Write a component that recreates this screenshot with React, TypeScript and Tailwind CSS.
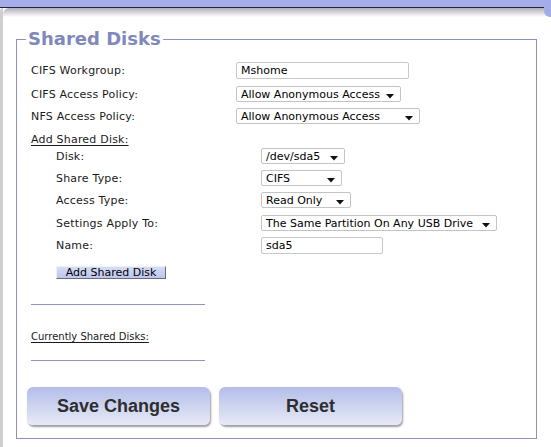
import React from "react";

const Arrow = () => (
  <svg width="8" height="5" viewBox="0 0 8 5" className="mt-[4px] shrink-0 ml-[4px]">
    <path d="M0 0 H8 L4 4.5 Z" fill="#111" />
  </svg>
);

const Select = ({ w, text }: { w: number; text: string }) => (
  <div
    style={{ width: w }}
    className="h-[16px] border border-[#c4c4c4] rounded-[2px] bg-white flex items-center justify-between pl-[4px] pr-[6px] text-[11px] text-black leading-none whitespace-nowrap"
  >
    <span>{text}</span>
    <Arrow />
  </div>
);

const Input = ({ w, text }: { w: number; text: string }) => (
  <div
    style={{ width: w }}
    className="h-[17px] border border-[#c8c8c8] rounded-[2px] bg-white flex items-center pl-[4px] text-[11px] text-black leading-none"
  >
    {text}
  </div>
);

const Row = ({
  label,
  children,
  indent = false,
  mt,
}: {
  label: string;
  children: React.ReactNode;
  indent?: boolean;
  mt: string;
}) => (
  <div className={`flex items-center ${mt} ${indent ? "pl-[25px]" : ""}`}>
    <div className="w-[205px] text-[11px] text-[#1a1a1a] tracking-[0.2px] leading-none">{label}</div>
    {children}
  </div>
);

const BigButton = ({ text }: { text: string }) => (
  <div className="w-[183px] h-[38px] rounded-[6px] bg-[linear-gradient(#b3bee9,#e7eaf6)] shadow-[1px_2px_2px_#9c9c9c] flex items-center justify-center font-['Liberation_Sans'] font-bold text-[18px] text-[#2e2e2e]">
    {text}
  </div>
);

export default function App() {
  return (
    <div className="w-[551px] h-[447px] bg-white relative overflow-hidden font-['DejaVu_Sans',sans-serif]">
      <div className="h-[7px] bg-[#a4adea]" />
      <div className="h-[1px] bg-[#23233a]" />
      <div className="absolute right-0 top-[7px] w-[7px] h-[10px] bg-[#a4adea] rounded-bl-[6px]" />
      <div className="flex">
        <div className="w-[3px] h-[439px] bg-[#cfcfd2] rounded-tl-[4px]" />
        <div className="w-[542px] h-[439px] bg-[linear-gradient(#aeaeb8,#ffffff_9px)] rounded-tl-[6px]">
          <fieldset className="ml-[13px] mt-[20px] w-[521px] border border-[#8f90c2] pb-[13px]">
            <legend className="ml-[9px] px-[2px] text-[18px] leading-[22px] font-bold text-[#8088bb]">
              Shared Disks
            </legend>
            <div className="flex flex-col pl-[14px]">
              <Row label="CIFS Workgroup:" mt="mt-[12px]">
                <Input w={173} text="Mshome" />
              </Row>
              <Row label="CIFS Access Policy:" mt="mt-[7px]">
                <Select w={165} text="Allow Anonymous Access" />
              </Row>
              <Row label="NFS Access Policy:" mt="mt-[6px]">
                <Select w={184} text="Allow Anonymous Access" />
              </Row>
              <div className="mt-[9px] h-[13px] text-[11px] leading-[13px] text-[#1a1a1a] tracking-[0.2px] underline underline-offset-2">
                Add Shared Disk:
              </div>
              <Row label="Disk:" indent mt="mt-[2px]">
                <Select w={84} text="/dev/sda5" />
              </Row>
              <Row label="Share Type:" indent mt="mt-[6px]">
                <Select w={81} text="CIFS" />
              </Row>
              <Row label="Access Type:" indent mt="mt-[6px]">
                <Select w={90} text="Read Only" />
              </Row>
              <Row label="Settings Apply To:" indent mt="mt-[7px]">
                <Select w={236} text="The Same Partition On Any USB Drive" />
              </Row>
              <Row label="Name:" indent mt="mt-[6px]">
                <Input w={122} text="sda5" />
              </Row>
              <div className="ml-[25px] mt-[12px] w-[110px] h-[13px] bg-[linear-gradient(#d6dcf5,#bcc5ec)] border-t border-l border-t-[#eef0fa] border-l-[#eef0fa] border-b border-r border-b-[#6c6c78] border-r-[#6c6c78] flex items-center justify-center text-[11px] leading-none text-black">
                Add Shared Disk
              </div>
              <div className="mt-[25px] w-[174px] h-[1px] bg-[#9394c4]" />
              <div className="mt-[26px] h-[12px] text-[10px] leading-[12px] text-[#1a1a1a] underline underline-offset-2">
                Currently Shared Disks:
              </div>
              <div className="mt-[17px] w-[174px] h-[1px] bg-[#9394c4]" />
              <div className="mt-[26px] -ml-[4px] flex gap-[9px]">
                <BigButton text="Save Changes" />
                <BigButton text="Reset" />
              </div>
            </div>
          </fieldset>
        </div>
      </div>
    </div>
  );
}
